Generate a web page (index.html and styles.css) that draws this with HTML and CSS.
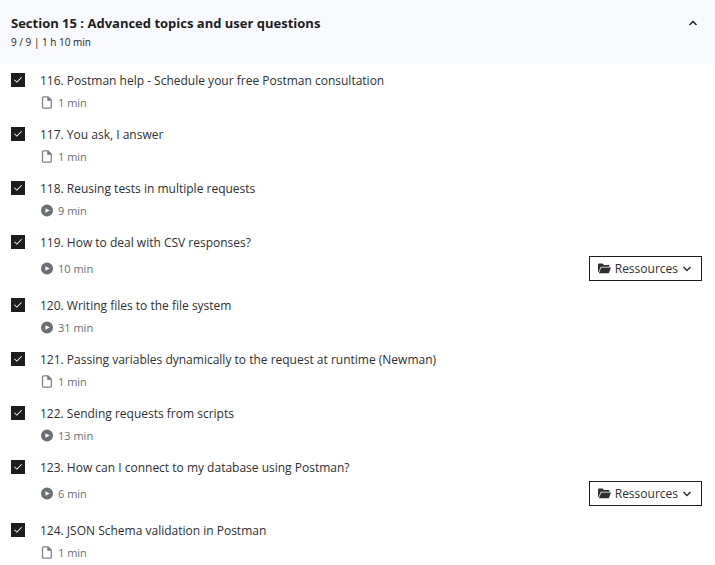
FILE: index.html
```
<!DOCTYPE html>
<html lang="en">
<head>
<meta charset="utf-8">
<meta name="viewport" content="width=device-width, initial-scale=1">
<title>Section 15</title>
<link rel="stylesheet" href="styles.css">
</head>
<body>
<svg class="sprite" aria-hidden="true">
  <symbol id="file" viewBox="0 0 12 13"><path d="M2.500.8H7L10.300 4v7.200a1 1 0 0 1-1 1H2.500a1 1 0 0 1-1-1V1.800a1 1 0 0 1 1-1z" fill="none" stroke="currentColor" stroke-opacity=".85" stroke-width="1.300"/><path d="M6.300.8v4h4z" fill="currentColor"/></symbol>
  <symbol id="play" viewBox="0 0 12 12"><path fill="currentColor" fill-rule="evenodd" d="M6 0a6 6 0 1 0 0 12A6 6 0 0 0 6 0zM4.400 3.700v4.600L8.800 6z"/></symbol>
  <symbol id="folder" viewBox="0 0 13 11"><path fill="currentColor" d="M0 9V1.500Q0 .5 1 .5h3.500L6 2h4.500q1 0 1 1v.8H2.800L.6 9zM3.200 4.600H13L11 9.700q-.2.600-1 .600H.900z"/></symbol>
  <symbol id="chevron" viewBox="0 0 10 6"><path d="M1.500 1 5 4.500 8.500 1" fill="none" stroke="currentColor" stroke-width="1.500"/></symbol>
</svg>
<section>
  <header class="head">
    <div>
      <h2 class="heading">Section 15 : Advanced topics and user questions</h2>
      <p class="progress">9 / 9 | 1 h 10 min</p>
    </div>
    <button class="toggle" type="button" aria-label="Collapse section"><svg class="chevron up"><use href="#chevron"/></svg></button>
  </header>
  <ul class="list">
    <li class="row"><input class="check" type="checkbox" id="l116" checked><div class="body"><label class="title" for="l116">116. Postman help - Schedule your free Postman consultation</label><div class="meta"><svg class="icon"><use href="#file"/></svg><span>1 min</span></div></div></li>
    <li class="row"><input class="check" type="checkbox" id="l117" checked><div class="body"><label class="title" for="l117">117. You ask, I answer</label><div class="meta"><svg class="icon"><use href="#file"/></svg><span>1 min</span></div></div></li>
    <li class="row"><input class="check" type="checkbox" id="l118" checked><div class="body"><label class="title" for="l118">118. Reusing tests in multiple requests</label><div class="meta"><svg class="icon"><use href="#play"/></svg><span>9 min</span></div></div></li>
    <li class="row"><input class="check" type="checkbox" id="l119" checked><div class="body"><label class="title" for="l119">119. How to deal with CSV responses?</label><div class="meta tall"><svg class="icon"><use href="#play"/></svg><span>10 min</span><button class="resources" type="button"><svg class="folder"><use href="#folder"/></svg>Ressources<svg class="chevron"><use href="#chevron"/></svg></button></div></div></li>
    <li class="row"><input class="check" type="checkbox" id="l120" checked><div class="body"><label class="title" for="l120">120. Writing files to the file system</label><div class="meta"><svg class="icon"><use href="#play"/></svg><span>31 min</span></div></div></li>
    <li class="row"><input class="check" type="checkbox" id="l121" checked><div class="body"><label class="title" for="l121">121. Passing variables dynamically to the request at runtime (Newman)</label><div class="meta"><svg class="icon"><use href="#file"/></svg><span>1 min</span></div></div></li>
    <li class="row"><input class="check" type="checkbox" id="l122" checked><div class="body"><label class="title" for="l122">122. Sending requests from scripts</label><div class="meta"><svg class="icon"><use href="#play"/></svg><span>13 min</span></div></div></li>
    <li class="row"><input class="check" type="checkbox" id="l123" checked><div class="body"><label class="title" for="l123">123. How can I connect to my database using Postman?</label><div class="meta tall"><svg class="icon"><use href="#play"/></svg><span>6 min</span><button class="resources" type="button"><svg class="folder"><use href="#folder"/></svg>Ressources<svg class="chevron"><use href="#chevron"/></svg></button></div></div></li>
    <li class="row"><input class="check" type="checkbox" id="l124" checked><div class="body"><label class="title" for="l124">124. JSON Schema validation in Postman</label><div class="meta"><svg class="icon"><use href="#file"/></svg><span>1 min</span></div></div></li>
  </ul>
</section>
</body>
</html>
```
FILE: styles.css
```
* { box-sizing: border-box; }
body { margin: 0; background: #fff; color: #1c1d1f; font-family: "Open Sans", "Noto Sans", sans-serif; font-size: 12px; }
.sprite { display: none; }
.head { display: flex; justify-content: space-between; align-items: flex-start; padding: 13px 17px 13px 11px; background: #f7f9fc; }
.heading { margin: 0; font-size: 13px; line-height: 20px; font-weight: 700; }
.progress { margin: 0; font-size: 10px; line-height: 18px; }
.toggle { display: flex; align-items: center; height: 20px; padding: 0; border: 0; background: none; color: inherit; }
.chevron { width: 10px; height: 6px; }
.up { transform: rotate(180deg); }
.list { margin: 0; padding: 0; list-style: none; }
.row { display: flex; gap: 15px; padding: 6px 13px 6px 11px; }
.check { appearance: none; flex: none; width: 14px; height: 14px; margin: 3px 0; background: #1c1d1f; display: grid; place-items: center; }
.check:checked::before { content: ""; width: 8px; height: 6px; background: #fff; clip-path: polygon(0 50%, 8% 40%, 35% 74%, 92% 0, 100% 8%, 36% 96%); }
.body { flex: 1; display: flex; flex-direction: column; }
.title { line-height: 22px; font-size: 12px; color: #2d2f31; }
.meta { display: flex; align-items: center; gap: 5px; height: 20px; padding-left: 1px; color: #6a6f73; font-size: 11px; }
.tall { height: 29px; }
.icon { width: 12px; height: 13px; }
.resources { display: flex; align-items: center; gap: 4px; height: 25px; margin-left: auto; padding: 0 9px 0 8px; border: 1px solid #1c1d1f; background: #fff; color: #2d2f31; font: 12px "Open Sans", "Noto Sans", sans-serif; }
.folder { width: 13px; height: 11px; }
```
